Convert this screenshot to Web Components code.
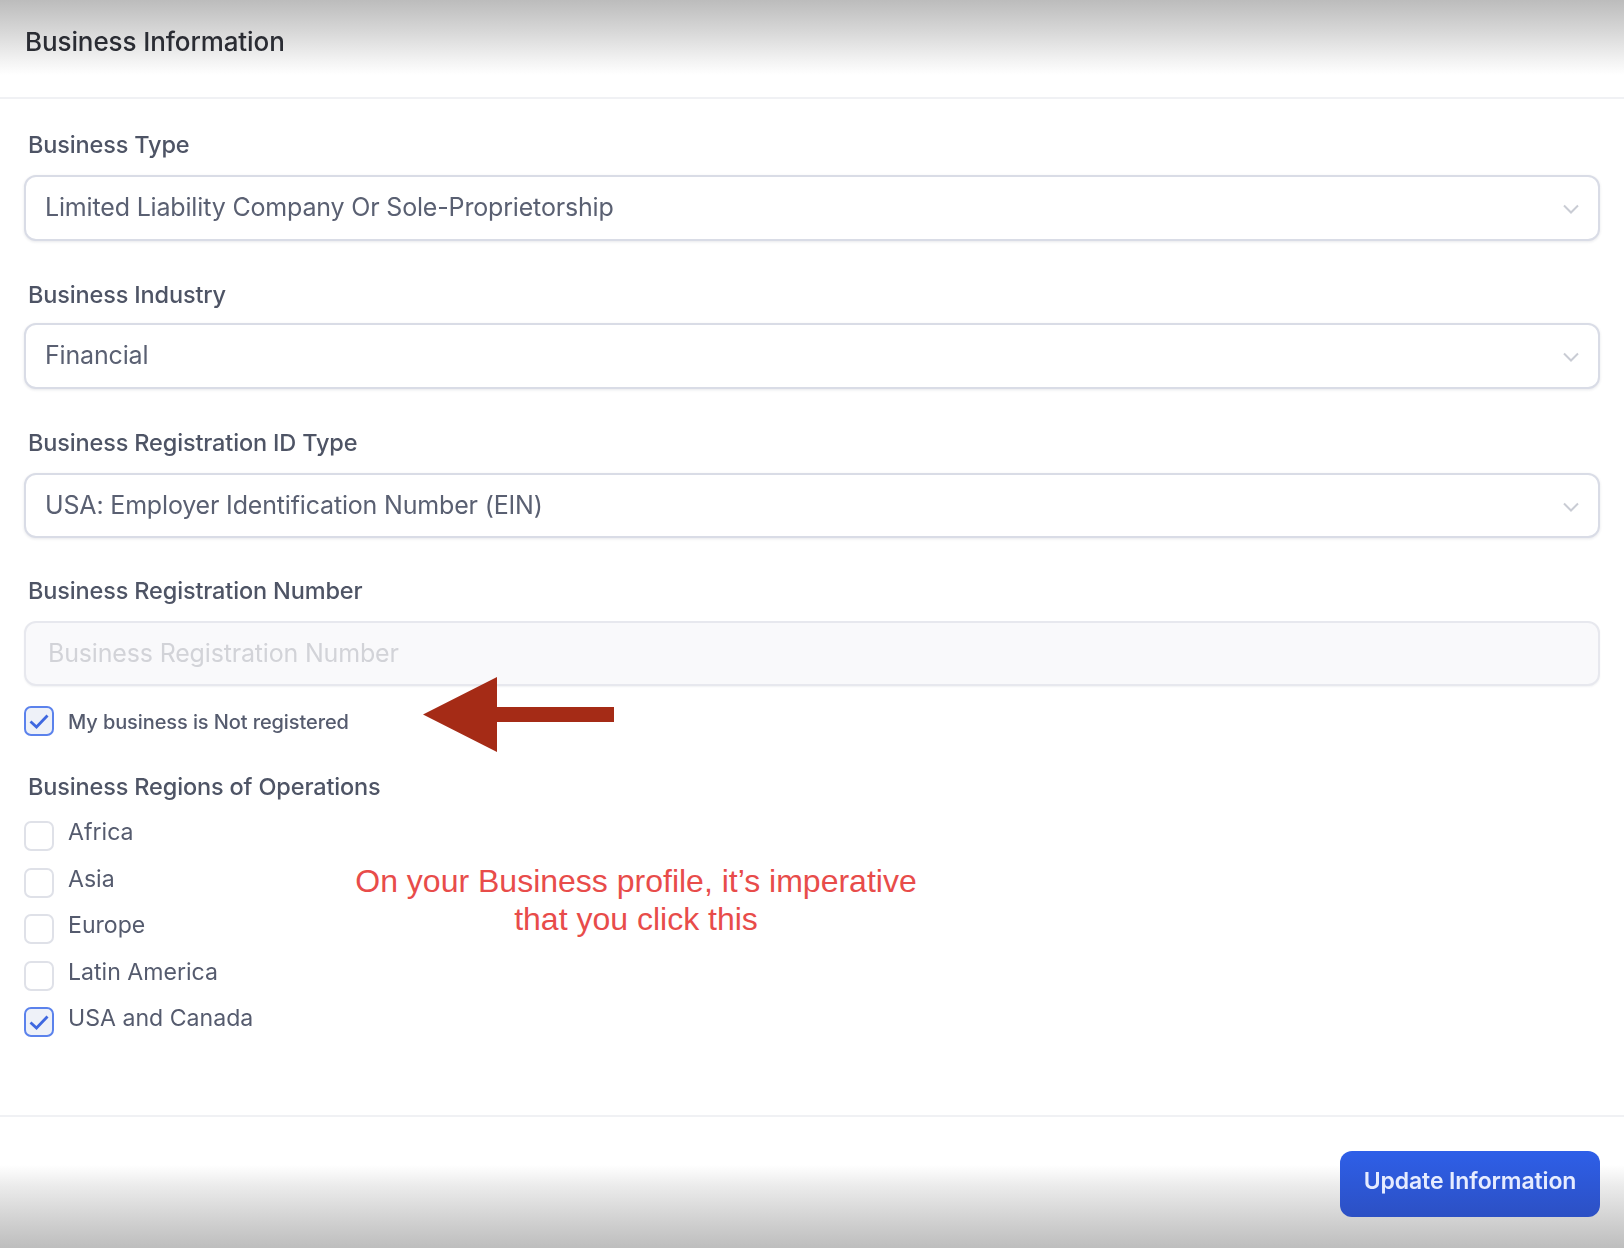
<!DOCTYPE html>
<html><head><meta charset="utf-8">
<style>
html,body{margin:0;padding:0;background:#fff}
body{width:1624px;height:1248px;overflow:hidden;font-family:Inter,"Liberation Sans",sans-serif}
</style></head><body>
<biz-page>
  <biz-header slot="header">Business Information</biz-header>
  <biz-select label="Business Type" style="--label-gap:16px;--h:66px;--after:40px">Limited Liability Company Or Sole-Proprietorship</biz-select>
  <biz-select label="Business Industry" style="--label-gap:14px;--h:66px;--after:40px">Financial</biz-select>
  <biz-select label="Business Registration ID Type" style="--label-gap:16px;--h:65px;--after:39px">USA: Employer Identification Number (EIN)</biz-select>
  <biz-input label="Business Registration Number" placeholder="Business Registration Number"></biz-input>
  <biz-check checked small style="--mt:20px">My business is Not registered</biz-check>
  <biz-regions label="Business Regions of Operations">
    <biz-check>Africa</biz-check>
    <biz-check>Asia</biz-check>
    <biz-check>Europe</biz-check>
    <biz-check>Latin America</biz-check>
    <biz-check checked>USA and Canada</biz-check>
  </biz-regions>
  <biz-footer slot="footer"><biz-button>Update Information</biz-button></biz-footer>
  <biz-note slot="overlay"></biz-note>
</biz-page>
<script>
const def=(name,html)=>customElements.define(name,class extends HTMLElement{
  connectedCallback(){
    if(this.shadowRoot)return;
    const r=this.attachShadow({mode:'open'});
    r.innerHTML=typeof html==='function'?html(this):html;
  }
});
const blur='filter:blur(.7px);';
def('biz-page',`<style>
:host{display:block;position:relative;width:1624px;height:1248px;background:#fff;overflow:hidden}
main{display:block;padding:32px 25px 0}
</style><slot name="header"></slot><main><slot></slot></main><slot name="footer"></slot><slot name="overlay"></slot>`);
def('biz-header',`<style>
:host{display:flex;align-items:flex-start;box-sizing:border-box;height:99px;padding:27px 0 0 25px;
background:linear-gradient(#bcbcbc 0,#d6d6d6 30px,#f4f4f4 62px,#fff 75px);border-bottom:2px solid #f0f1f4;
font:500 26px/30px Inter,sans-serif;color:#2a2c33;letter-spacing:-.1px}
span{${blur}}
</style><span><slot></slot></span>`);
const label=`label{display:block;padding-left:3px;font:500 23.5px/28px Inter,sans-serif;color:#4e5465;letter-spacing:-.15px;${blur}}`;
def('biz-select',el=>`<style>
:host{display:block;margin-bottom:var(--after)}
${label}
.box{box-sizing:border-box;display:flex;align-items:center;justify-content:space-between;height:var(--h);margin:var(--label-gap) -1px 0;
padding:0 18px 2px 19px;background:#fff;border:2px solid #d9dce6;border-radius:12px;box-shadow:0 1px 3px rgba(20,30,60,.10)}
span{font:400 25px/30px Inter,sans-serif;color:#5a6072;letter-spacing:-.17px;${blur}}
svg{width:18px;height:12px;margin-top:4px;${blur}}
</style><label>${el.getAttribute('label')}</label>
<div class="box"><span><slot></slot></span><svg viewBox="0 0 18 12" fill="none" stroke="#c9ccd4" stroke-width="2"><path d="M2 2.5 9 9.5 16 2.5"/></svg></div>`);
def('biz-input',el=>`<style>
:host{display:block}
${label}
.box{box-sizing:border-box;display:flex;align-items:center;height:65px;margin:16px -1px 0;padding:0 22px 2px;
background:#f9f9fb;border:2px solid #e7e8ee;border-radius:12px;box-shadow:0 1px 2px rgba(20,30,60,.06)}
span{font:400 25px/30px Inter,sans-serif;color:#d2d3d8;letter-spacing:-.17px;${blur}}
</style><label>${el.getAttribute('label')}</label><div class="box"><span>${el.getAttribute('placeholder')}</span></div>`);
def('biz-check',el=>{
  const on=el.hasAttribute('checked'),small=el.hasAttribute('small');
  return `<style>
:host{display:flex;align-items:flex-start;gap:14px;margin:var(--mt,0) 0 0 -1px;height:30px}
.c{box-sizing:border-box;flex:none;width:30px;height:30px;border-radius:7px;display:flex;align-items:center;justify-content:center;
border:2px solid ${on?'#5b82ec':'#dfe1e8'};background:${on?'#eef1f8':'#fff'};${blur}}
svg{width:22px;height:18px}
span{font:${small?'500 20px/26px':'400 23.1px/26px'} Inter,sans-serif;color:#555b6e;letter-spacing:${small?'-.1px':'0'};${small?'margin-top:3px;':'margin-top:-2px;'}${blur}}
</style><div class="c">${on?'<svg viewBox="0 0 22 18" fill="none" stroke="#3f68e0" stroke-width="2.8"><path d="M2.5 9.5 8.5 15 19.5 3.5"/></svg>':''}</div><span><slot></slot></span>`});
def('biz-regions',el=>`<style>
:host{display:block;margin-top:37px}
${label}
.list{display:flex;flex-direction:column;gap:16.5px;margin-top:20px}
</style><label>${el.getAttribute('label')}</label><div class="list"><slot></slot></div>`);
def('biz-footer',`<style>
:host{position:absolute;left:0;right:0;bottom:0;box-sizing:border-box;height:133px;display:flex;justify-content:flex-end;align-items:flex-start;
padding:34px 24px 0 0;border-top:2px solid #f0f1f4;background:linear-gradient(#fff 0,#fff 48px,#ececec 68px,#d0d0d0 105px,#bcbcbc 133px)}
</style><slot></slot>`);
def('biz-button',`<style>
:host{display:flex;align-items:center;justify-content:center;box-sizing:border-box;width:260px;height:66px;padding-bottom:6px;border-radius:12px;
background:linear-gradient(#2e5fe8,#2c50c4);color:#e6ecff;font:600 23px/30px Inter,sans-serif;letter-spacing:-.1px}
span{${blur}}
</style><span><slot></slot></span>`);
def('biz-note',`<style>
:host{position:absolute;inset:0;pointer-events:none}
svg{position:absolute;left:423px;top:677px;width:192px;height:76px}
p{position:absolute;left:336px;top:862px;width:600px;margin:0;text-align:center;font:400 32px/38px "Liberation Sans",Arial,sans-serif;color:#e84c4a}
</style><svg viewBox="0 0 192 76"><path fill="#a52b16" d="M0 37.5 74 0V30H191V45H74V75Z"/></svg>
<p>On your Business profile, it’s imperative<br>that you click this</p>`);
</script>
</body></html>
